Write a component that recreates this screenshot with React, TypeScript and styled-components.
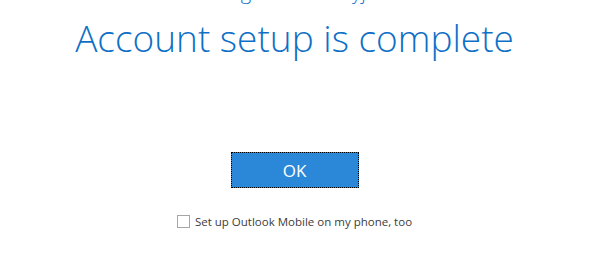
import React from 'react';
import styled, { createGlobalStyle } from 'styled-components';

const Global = createGlobalStyle`
    html, body {
        margin: 0;
        padding: 0;
        background: #ffffff;
        overflow: hidden;
    }
`;

const Page = styled.div`
    width: 599px;
    height: 279px;
    box-sizing: border-box;
    padding-right: 10px;
    display: flex;
    flex-direction: column;
    align-items: center;
    font-family: "Open Sans", "Noto Sans", sans-serif;
    overflow: hidden;
`;

// the address line above the heading is scrolled almost out of view
const Address = styled.div`
    margin-top: -21px;
    height: 26px;
    font-size: 20px;
    line-height: 26px;
    font-weight: 300;
    color: #0f6fc6;
    white-space: nowrap;
`;

const Heading = styled.h1`
    margin: 11px 0 0;
    font-size: 37px;
    line-height: 44px;
    font-weight: 300;
    color: #0f6fc6;
    white-space: nowrap;
`;

const OkButton = styled.button`
    margin-top: 92px;
    width: 128px;
    height: 36px;
    box-sizing: border-box;
    background: #2b88d8;
    border: 1px dotted #000000;
    outline: none;
    color: #ffffff;
    font-family: inherit;
    font-size: 17px;
    padding: 0;
    cursor: pointer;
`;

const CheckRow = styled.label`
    margin-top: 26px;
    display: flex;
    align-items: center;
    gap: 5px;
    font-size: 11.5px;
    color: #3c3c3c;
`;

const Box = styled.span`
    width: 11px;
    height: 11px;
    border: 1px solid #a6a6a6;
    background: #ffffff;
`;

export default function App() {
    return (
        <>
            <Global />
            <Page>
                <Address>admin.ga@contosoyj.com</Address>
                <Heading>Account setup is complete</Heading>
                <OkButton>OK</OkButton>
                <CheckRow>
                    <Box />
                    Set up Outlook Mobile on my phone, too
                </CheckRow>
            </Page>
        </>
    );
}
